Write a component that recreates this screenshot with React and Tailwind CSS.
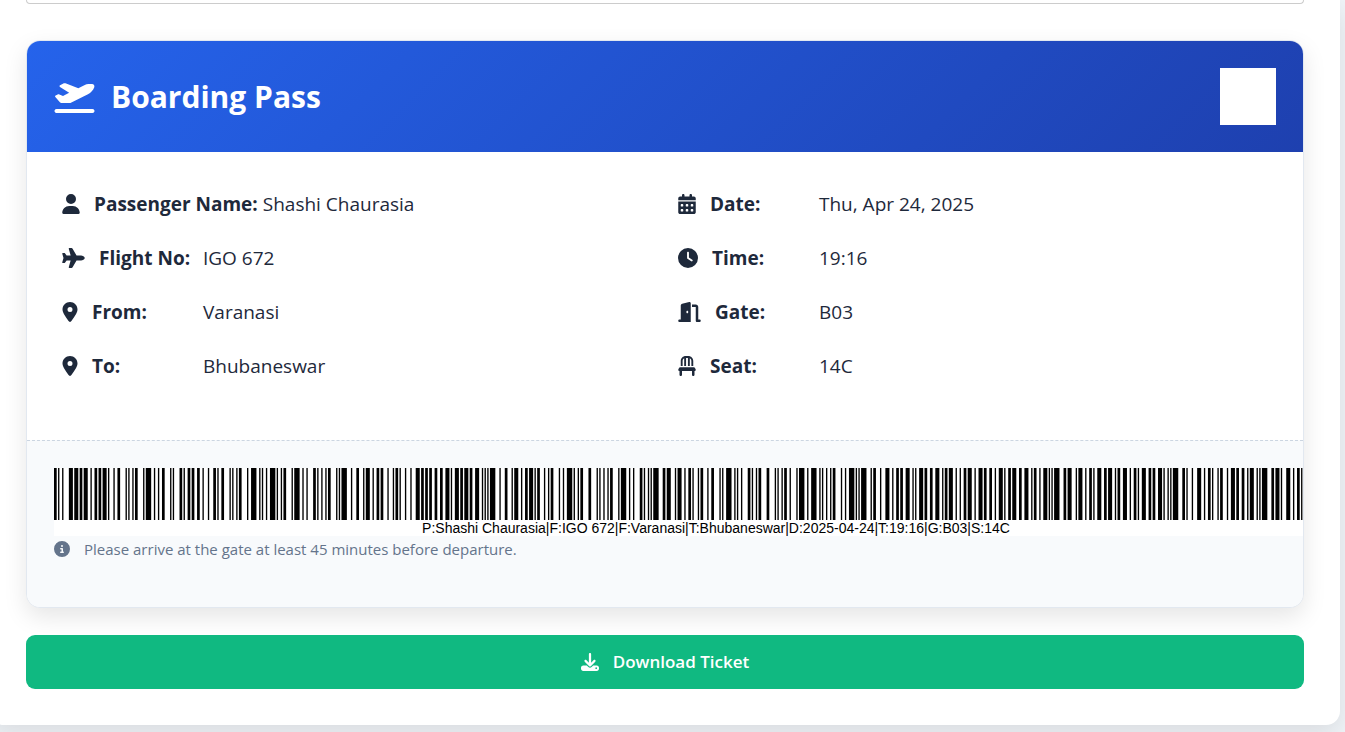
import React from "react";
import {
  FaPlaneDeparture,
  FaUser,
  FaPlane,
  FaLocationDot,
  FaCalendarDays,
  FaClock,
  FaDoorOpen,
  FaChair,
  FaCircleInfo,
  FaDownload,
} from "react-icons/fa6";

// Code 128 bar/space widths, indexed by symbol value.
const CODE128 = (
  "212222 222122 222221 121223 121322 131222 122213 122312 132212 221213 " +
  "221312 231212 112232 122132 122231 113222 123122 123221 223211 221132 " +
  "221231 213212 223112 312131 311222 321122 321221 312212 322112 322211 " +
  "212123 212321 232121 111323 131123 131321 112313 132113 132311 211313 " +
  "231113 231311 112133 112331 132131 113123 113321 133121 313121 211331 " +
  "231131 213113 213311 213131 311123 311321 331121 312113 312311 332111 " +
  "314111 221411 431111 111224 111422 121124 121421 141122 141221 112214 " +
  "112412 122114 122411 142112 142211 241211 221114 413111 241112 134111 " +
  "111242 121142 121241 114212 124112 124211 411212 421112 421211 212141 " +
  "214121 412121 111143 111341 131141 114113 114311 411113 411311 113141 " +
  "114131 311141 411131 211412 211214 211232 2331112"
).split(" ");
const START_B = 104;
const STOP = 106;

function encode(text) {
  const data = [...text].map((c) => c.charCodeAt(0) - 32);
  const sum = data.reduce((acc, v, i) => acc + v * (i + 1), START_B) % 103;
  const bars = [];
  let x = 0;
  [START_B, ...data, sum, STOP].forEach((symbol) => {
    [...CODE128[symbol]].forEach((w, i) => {
      if (i % 2 === 0) bars.push({ x, w: Number(w) });
      x += Number(w);
    });
  });
  return { bars, total: x };
}

function Barcode({ value }) {
  const { bars, total } = encode(value);
  return (
    <div className="w-[1324px] bg-white">
      <svg
        className="block h-[52px] w-full"
        viewBox={`0 0 ${total} 52`}
        preserveAspectRatio="none"
        aria-hidden="true"
      >
        {bars.map((b) => (
          <rect key={b.x} x={b.x} y="0" width={b.w} height="52" />
        ))}
      </svg>
      <p className="text-center font-['Liberation_Sans',Arial,sans-serif] text-[14px] leading-4 whitespace-nowrap text-black">
        {value}
      </p>
    </div>
  );
}

function Detail({ icon: Icon, iconWidth, label, value }) {
  return (
    <div className="flex items-center gap-[5px] text-[19px] leading-7">
      <dt className="flex min-w-[136px] items-center gap-[14px] font-bold whitespace-nowrap">
        <Icon className={`h-5 shrink-0 ${iconWidth}`} />
        {label}
      </dt>
      <dd>{value}</dd>
    </div>
  );
}

const trip = [
  { icon: FaUser, iconWidth: "w-[18px]", label: "Passenger Name:", value: "Shashi Chaurasia" },
  { icon: FaPlane, iconWidth: "w-[23px]", label: "Flight No:", value: "IGO 672" },
  { icon: FaLocationDot, iconWidth: "w-4", label: "From:", value: "Varanasi" },
  { icon: FaLocationDot, iconWidth: "w-4", label: "To:", value: "Bhubaneswar" },
];

const schedule = [
  { icon: FaCalendarDays, iconWidth: "w-[18px]", label: "Date:", value: "Thu, Apr 24, 2025" },
  { icon: FaClock, iconWidth: "w-5", label: "Time:", value: "19:16" },
  { icon: FaDoorOpen, iconWidth: "w-[23px]", label: "Gate:", value: "B03" },
  { icon: FaChair, iconWidth: "w-[18px]", label: "Seat:", value: "14C" },
];

const barcodeText =
  "P:Shashi Chaurasia|F:IGO 672|F:Varanasi|T:Bhubaneswar|D:2025-04-24|T:19:16|G:B03|S:14C";

export default function App() {
  return (
    <div className="min-h-screen overflow-hidden bg-[#f0f4f8] pr-[5px] font-['Segoe_UI','Open_Sans','Noto_Sans',sans-serif] text-[#1e293b]">
      <main className="-ml-[10px] rounded-b-[14px] bg-white px-9 pb-9 shadow-[0_9px_27px_rgba(0,0,0,0.1)]">
        <div className="h-1 rounded-b-[7px] border-x border-b border-[#ccc]" />

        <section className="mt-9 overflow-hidden rounded-[14px] border border-[#e2e8f0] bg-white shadow-[0_9px_23px_rgba(0,0,0,0.1)]">
          <header className="flex items-center justify-between bg-[linear-gradient(135deg,#2563eb,#1e40af)] p-[27px] text-white">
            <h1 className="flex items-center gap-4 text-[30px] leading-[41px] font-bold">
              <FaPlaneDeparture className="h-8 w-[41px]" />
              Boarding Pass
            </h1>
            <div className="h-[57px] w-14 bg-white" />
          </header>

          <div className="grid grid-cols-2 gap-x-[26px] px-[35px] pt-[38px] pb-[60px]">
            {[trip, schedule].map((list, i) => (
              <dl key={i} className="flex flex-col gap-[26px]">
                {list.map((item) => (
                  <Detail key={item.label} {...item} />
                ))}
              </dl>
            ))}
          </div>

          <footer className="overflow-hidden border-t border-dashed border-[#cbd5e1] bg-[#f8fafc] pt-[27px] pb-[46px] pl-[27px]">
            <Barcode value={barcodeText} />
            <p className="flex items-center gap-[14px] pt-px text-[15px] leading-6 text-[#64748b]">
              <FaCircleInfo className="size-4" />
              Please arrive at the gate at least 45 minutes before departure.
            </p>
          </footer>
        </section>

        <button
          type="button"
          className="mt-[27px] flex h-[54px] w-full items-center justify-center gap-[14px] rounded-[9px] bg-[#10b981] text-[17px] font-semibold text-white"
        >
          <FaDownload className="size-[18px]" />
          Download Ticket
        </button>
      </main>
    </div>
  );
}
